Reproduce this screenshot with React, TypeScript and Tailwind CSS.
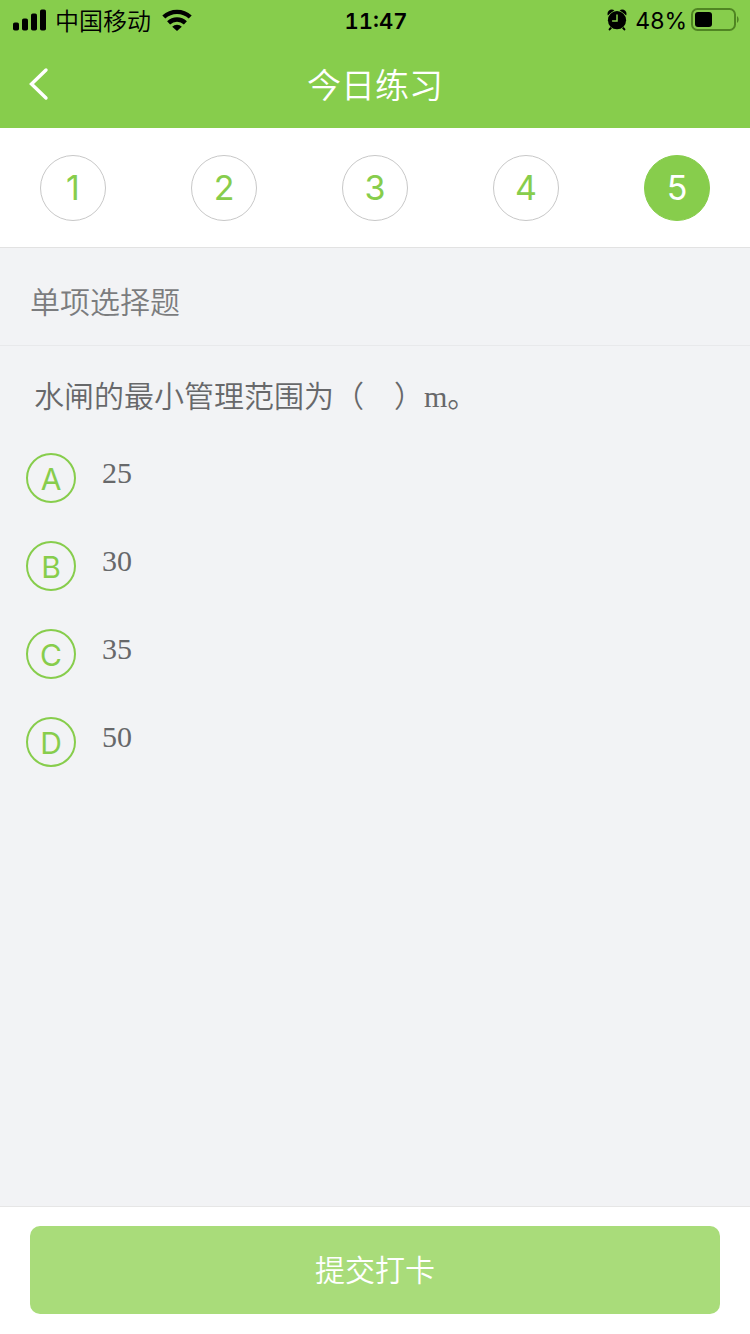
import React, { useState } from 'react';

interface Option {
  key: string;
  text: string;
}

const QUESTIONS = [1, 2, 3, 4, 5];

const OPTIONS: Option[] = [
  { key: 'A', text: '25' },
  { key: 'B', text: '30' },
  { key: 'C', text: '35' },
  { key: 'D', text: '50' },
];

const SignalIcon = () => (
  <svg width="34" height="22" viewBox="0 0 34 22" fill="currentColor" aria-hidden="true">
    <rect x="0" y="13.5" width="6" height="8" rx="1.8" />
    <rect x="9" y="9.5" width="6" height="12" rx="1.8" />
    <rect x="18" y="4.5" width="6" height="17" rx="1.8" />
    <rect x="27" y="0.5" width="6" height="21" rx="1.8" />
  </svg>
);

const WifiIcon = () => (
  <svg width="30" height="22" viewBox="0 0 30 22" fill="none" stroke="currentColor" strokeWidth="4.4" aria-hidden="true">
    <path d="M1.8 8a19.5 19.5 0 0 1 26.4 0" />
    <path d="M6.6 13.8a12.3 12.3 0 0 1 16.8 0" />
    <path d="M15 22l-4.8-4.2a6.8 6.8 0 0 1 9.6 0z" fill="currentColor" stroke="none" />
  </svg>
);

const AlarmIcon = () => (
  <svg width="20" height="22" viewBox="0 0 20 22" aria-hidden="true">
    <g fill="currentColor">
      <path d="M0.8 6.6C-0.6 2.4 3.2 -0.8 7.4 1.2z" />
      <path d="M19.2 6.6C20.6 2.4 16.8 -0.8 12.6 1.2z" />
    </g>
    <path d="M4.6 18l-2 2.4M15.4 18l2 2.4" fill="none" stroke="currentColor" strokeWidth="2" strokeLinecap="round" />
    <circle cx="10" cy="11.2" r="9.5" fill="#87cd4c" />
    <circle cx="10" cy="11.2" r="9.1" fill="currentColor" />
    <path d="M10 6v6H5.6" fill="none" stroke="#87cd4c" strokeWidth="1.5" strokeLinecap="round" />
  </svg>
);

const BatteryIcon = () => (
  <svg width="48" height="24" viewBox="0 0 48 24" aria-hidden="true">
    <rect x="1" y="1" width="43" height="21" rx="5.5" fill="none" stroke="#508523" strokeWidth="2" />
    <rect x="4" y="4" width="17" height="15" rx="3" fill="currentColor" />
    <path d="M46 8c2.2 1.4 2.2 5.6 0 7z" fill="#508523" />
  </svg>
);

const StatusBar = () => (
  <div className="grid h-10 grid-cols-[1fr_auto_1fr] items-center pr-[11px] pl-[13px] text-[23px] leading-none text-black">
    <div className="flex items-center gap-2">
      <SignalIcon />
      <span className="pt-[3px] text-2xl leading-none">中国移动</span>
      <span className="pl-[3px]"><WifiIcon /></span>
    </div>
    <span className="pt-[2px] text-[22px] font-semibold tabular-nums">11:47</span>
    <div className="flex items-center justify-end gap-1">
      <span className="pr-1"><AlarmIcon /></span>
      <span className="pt-[2px] font-normal">48%</span>
      <BatteryIcon />
    </div>
  </div>
);

const App: React.FC = () => {
  const [current, setCurrent] = useState(5);
  const [answer, setAnswer] = useState('');

  return (
    <div className="flex min-h-screen flex-col bg-[#f2f3f5] font-['Inter','Noto_Sans_CJK_SC',sans-serif] font-[350]">
      <header className="bg-[#87cd4c]">
        <StatusBar />
        <div className="grid h-22 grid-cols-[1fr_auto_1fr] items-center px-7 text-white">
          <button type="button" aria-label="返回" className="w-6">
            <svg width="22" height="34" viewBox="0 0 22 34" fill="none" stroke="currentColor" strokeWidth="3.4" aria-hidden="true">
              <path d="M18 3L3.5 17l14.5 14" strokeLinecap="round" />
            </svg>
          </button>
          <h1 className="pt-[3px] text-[34px] leading-none font-[350]">今日练习</h1>
        </div>
      </header>

      <nav className="flex h-30 items-center justify-between border-b border-[#e2e2e2] bg-white px-10">
        {QUESTIONS.map(n => (
          <button
            key={n}
            type="button"
            onClick={() => setCurrent(n)}
            className={`size-[66px] rounded-full border text-[34px] leading-none font-normal ${n === current ? 'border-[#87cd4c] bg-[#87cd4c] text-white' : 'border-[#c8c8c8] bg-white text-[#87cd4c]'}`}
          >
            {n}
          </button>
        ))}
      </nav>

      <main className="flex-1">
        <h2 className="flex h-[98px] items-center border-b border-[#e8e9eb] px-[30px] pt-3 text-[30px] font-[350] text-[#7b7c7e]">单项选择题</h2>

        <fieldset className="px-[26px] pt-7 font-['Liberation_Serif','Noto_Sans_CJK_SC',serif] text-[30px] text-[#67686a]">
          <legend className="contents">
            <span className="block px-2 pt-px leading-[44px]">水闸的最小管理范围为（　）m。</span>
          </legend>
          <div className="mt-[34px] flex flex-col gap-[38px]">
            {OPTIONS.map(option => (
              <label key={option.key} className="flex cursor-pointer gap-[26px]">
                <span className="grid size-[50px] place-items-center font-['Inter',sans-serif] leading-none font-normal text-[#87cd4c]">
                  <input
                    type="radio"
                    name="answer"
                    value={option.key}
                    checked={answer === option.key}
                    onChange={() => setAnswer(option.key)}
                    className="peer col-start-1 row-start-1 size-[50px] appearance-none rounded-full border-2 border-[#87cd4c] checked:bg-[#87cd4c]"
                  />
                  <span className="col-start-1 row-start-1 pt-px peer-checked:text-white">{option.key}</span>
                </span>
                <span className="leading-10">{option.text}</span>
              </label>
            ))}
          </div>
        </fieldset>
      </main>

      <footer className="border-t border-[#e6e6e6] bg-white px-[30px] pt-[19px] pb-5">
        <button type="button" className="h-22 w-full rounded-[10px] bg-[#a9dc7a] text-[30px] text-white">
          提交打卡
        </button>
      </footer>
    </div>
  );
};

export default App;
